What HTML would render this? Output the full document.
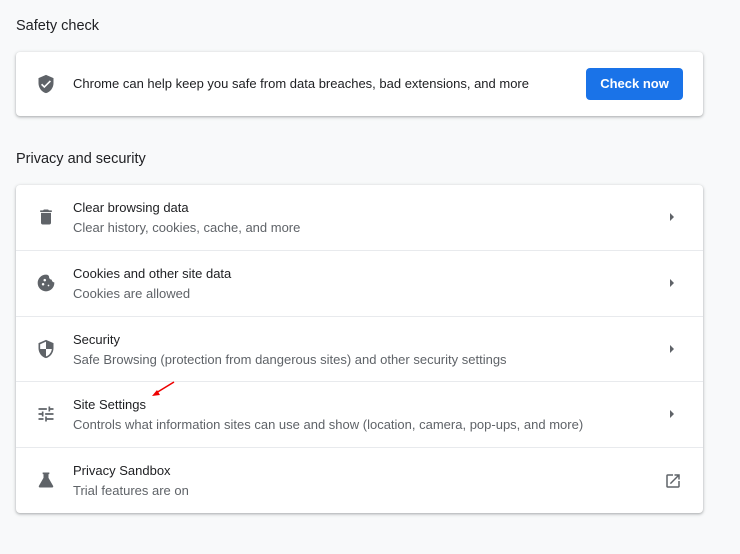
<!DOCTYPE html>
<html><head><style>
body{margin:0;width:740px;height:554px;background:#f8f9fa;font-family:"Liberation Sans",sans-serif;position:relative;overflow:hidden;color:#202124}
.h{position:absolute;left:16px;font-size:14.5px;color:#202124}
.card{position:absolute;left:16px;width:687px;background:#fff;border-radius:4px;box-shadow:0 1px 2px rgba(60,64,67,.3),0 1px 3px 1px rgba(60,64,67,.12)}
.row{position:absolute;left:0;width:687px;height:65px;border-top:1px solid #e8eaed}
.row:first-child{border-top:none}
.t{position:absolute;left:57px;top:15px;font-size:13px;color:#202124}
.s{position:absolute;left:57px;top:35px;font-size:13px;color:#5f6368}
.ic{position:absolute;left:20px;top:22px;width:20px;height:20px}
.ar{position:absolute;left:654px;top:28px;width:0;height:0;border-left:4px solid #5f6368;border-top:4px solid transparent;border-bottom:4px solid transparent}
</style></head><body>
<div class="h" style="top:18px">Safety check</div>
<div class="card" style="top:52px;height:64px">
<svg class="ic" style="top:22px" viewBox="0 0 24 24"><path fill="#5f6368" d="M12 1L3 5v6c0 5.5 3.8 10.7 9 12 5.2-1.3 9-6.5 9-12V5l-9-4zm-2 16l-4-4 1.4-1.4L10 14.2l6.6-6.6L18 9l-8 8z"/></svg>
<div style="position:absolute;left:57px;top:24px;font-size:13px">Chrome can help keep you safe from data breaches, bad extensions, and more</div>
<div style="position:absolute;left:570px;top:16px;width:97px;height:32px;background:#1a73e8;border-radius:4px;color:#fff;font-weight:bold;font-size:13px;line-height:32px;text-align:center">Check now</div>
</div>
<div class="h" style="top:151px">Privacy and security</div>
<div class="card" style="top:185px;height:328px">
<div class="row" style="top:0">
<svg class="ic" viewBox="0 0 24 24"><path fill="#5f6368" d="M6 19c0 1.1.9 2 2 2h8c1.1 0 2-.9 2-2V7H6v12zM19 4h-3.5l-1-1h-5l-1 1H5v2h14V4z"/></svg>
<div class="t">Clear browsing data</div><div class="s">Clear history, cookies, cache, and more</div><div class="ar"></div></div>
<div class="row" style="top:65px">
<svg class="ic" viewBox="0 0 24 24"><path fill="#5f6368" d="M21.9 11.3c-1.7-.2-3-1.6-3-3.3-1.9 0-3.4-1.6-3.2-3.5C15.4 3 14.2 2 12 2 6.5 2 2 6.5 2 12s4.5 10 10 10 10-4.5 10-10c0-.2 0-.5-.1-.7zM8.5 15A1.5 1.5 0 118.5 12a1.5 1.5 0 010 3zm2-5A1.5 1.5 0 1110.5 7a1.5 1.5 0 010 3zm4.5 6a1 1 0 110-2 1 1 0 010 2z"/></svg>
<div class="t">Cookies and other site data</div><div class="s">Cookies are allowed</div><div class="ar"></div></div>
<div class="row" style="top:131px">
<svg class="ic" viewBox="0 0 24 24"><path fill="#5f6368" d="M12 1L3 5v6c0 5.5 3.8 10.7 9 12 5.2-1.3 9-6.5 9-12V5l-9-4zm0 11h7c-.5 4.1-3.3 7.8-7 8.9V12H5V6.3l7-3.1V12z"/></svg>
<div class="t">Security</div><div class="s">Safe Browsing (protection from dangerous sites) and other security settings</div><div class="ar"></div></div>
<div class="row" style="top:196px">
<svg class="ic" viewBox="0 0 24 24"><path fill="#5f6368" d="M3 17v2h6v-2H3zM3 5v2h10V5H3zm10 16v-2h8v-2h-8v-2h-2v6h2zM7 9v2H3v2h4v2h2V9H7zm14 4v-2H11v2h10zm-6-4h2V7h4V5h-4V3h-2v6z"/></svg>
<div class="t">Site Settings</div><div class="s">Controls what information sites can use and show (location, camera, pop-ups, and more)</div><div class="ar"></div>
<svg style="position:absolute;left:132px;top:-2px" width="28" height="20" viewBox="0 0 28 20"><path d="M26 2L8 13" stroke="#e00" stroke-width="1.6"/><path d="M4 16l8-1-3-5z" fill="#e00"/></svg></div>
<div class="row" style="top:262px">
<svg class="ic" viewBox="0 0 24 24"><path fill="#5f6368" d="M8 3h8v2h-1v4.5l5.5 9.5c.6 1-.1 2-1.2 2H4.7c-1.1 0-1.8-1-1.2-2L9 9.5V5H8z"/></svg>
<div class="t">Privacy Sandbox</div><div class="s">Trial features are on</div>
<svg style="position:absolute;left:648px;top:24px" width="18" height="18" viewBox="0 0 24 24"><path fill="#5f6368" d="M19 19H5V5h7V3H5a2 2 0 00-2 2v14a2 2 0 002 2h14c1.1 0 2-.9 2-2v-7h-2v7zM14 3v2h3.6l-9.8 9.8 1.4 1.4L19 6.4V10h2V3h-7z"/></svg></div>
</div>
</body></html>
